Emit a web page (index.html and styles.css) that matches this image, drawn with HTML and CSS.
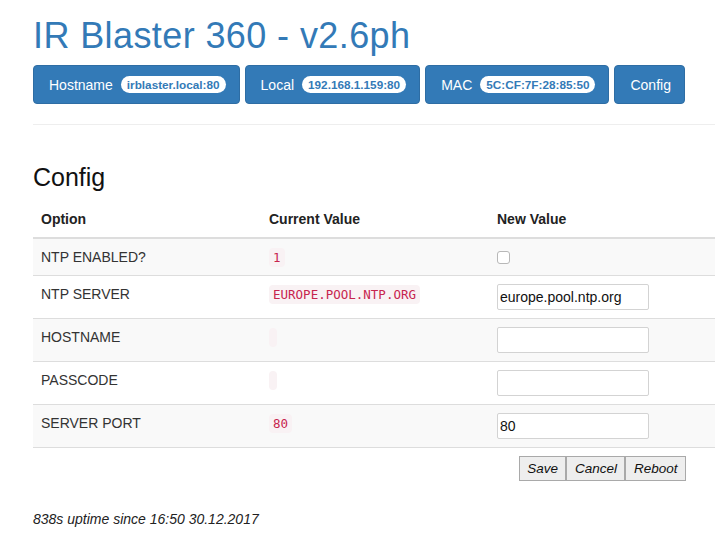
FILE: index.html
```html
<!DOCTYPE html>
<html>
<head>
<meta charset="utf-8">
<title>IR Blaster 360</title>
<link rel="stylesheet" href="styles.css">
</head>
<body>
<div class="page">
  <h1 class="title">IR Blaster 360 - v2.6ph</h1>
  <div class="nav">
    <a class="nav-btn">Hostname <span class="badge">irblaster.local:80</span></a>
    <a class="nav-btn">Local <span class="badge">192.168.1.159:80</span></a>
    <a class="nav-btn">MAC <span class="badge">5C:CF:7F:28:85:50</span></a>
    <a class="nav-btn">Config</a>
  </div>
  <hr class="divider">
  <h3 class="section-title">Config</h3>
  <table class="config-table">
    <thead>
      <tr><th>Option</th><th>Current Value</th><th>New Value</th></tr>
    </thead>
    <tbody>
      <tr class="odd"><td>NTP ENABLED?</td><td><code>1</code></td><td><span class="checkbox"></span></td></tr>
      <tr><td>NTP SERVER</td><td><code>EUROPE.POOL.NTP.ORG</code></td><td><input class="field" type="text" value="europe.pool.ntp.org"></td></tr>
      <tr class="odd"><td>HOSTNAME</td><td><code></code></td><td><input class="field" type="text" value=""></td></tr>
      <tr><td>PASSCODE</td><td><code></code></td><td><input class="field" type="text" value=""></td></tr>
      <tr class="odd"><td>SERVER PORT</td><td><code>80</code></td><td><input class="field" type="text" value="80"></td></tr>
    </tbody>
  </table>
  <div class="actions">
    <button class="act">Save</button><button class="act">Cancel</button><button class="act">Reboot</button>
  </div>
  <p class="uptime">838s uptime since 16:50 30.12.2017</p>
</div>
</body>
</html>
```

FILE: styles.css
```css
html, body {
  margin: 0;
  padding: 0;
  overflow: hidden;
  background: #fff;
}
body {
  font-family: "Liberation Sans", Arial, sans-serif;
  font-size: 14px;
  line-height: 20px;
  color: #333;
}
.page {
  width: 684px;
  padding-left: 33px;
}
.title {
  margin: 16px 0 9px;
  font-size: 36px;
  font-weight: normal;
  line-height: 40px;
  color: #337ab7;
  letter-spacing: 0.4px;
}
.nav {
  display: flex;
  gap: 5px;
}
.nav-btn {
  display: flex;
  align-items: center;
  gap: 8px;
  height: 39px;
  box-sizing: border-box;
  padding: 0 13px 0 15px;
  background: #337ab7;
  border: 1px solid #2e6da4;
  border-radius: 4px;
  color: #fff;
  font-size: 14px;
  text-decoration: none;
}
.badge {
  display: inline-block;
  padding: 3px 6px 2px;
  background: #fff;
  color: #337ab7;
  font-size: 11.75px;
  font-weight: bold;
  line-height: 12px;
  border-radius: 9px;
}
.divider {
  margin: 20px 0 0;
  border: 0;
  border-top: 1px solid #eee;
}
.section-title {
  margin: 38px 0 10px;
  font-size: 25px;
  font-weight: normal;
  line-height: 28px;
  color: #111;
}
.config-table {
  width: 684px;
  table-layout: fixed;
  border-collapse: collapse;
  border-spacing: 0;
}
.config-table th,
.config-table td {
  padding: 8px;
  text-align: left;
  vertical-align: top;
  line-height: 20px;
}
.config-table th {
  font-weight: bold;
  color: #222;
  border-bottom: 2px solid #ddd;
}
.config-table td {
  border-top: 1px solid #ddd;
}
.config-table tbody tr:last-child td {
  border-bottom: 1px solid #ddd;
}
.config-table tr.odd td {
  background: #f9f9f9;
}
code {
  padding: 2px 4px;
  font-family: "DejaVu Sans Mono", "Liberation Mono", monospace;
  font-size: 12.5px;
  line-height: 14px;
  color: #c7254e;
  background: #f9f2f4;
  border-radius: 4px;
}
.checkbox {
  display: block;
  width: 11px;
  height: 11px;
  margin-top: 4px;
  border: 1px solid #b8b8b8;
  border-radius: 3px;
  background: #fff;
}
.field {
  display: block;
  width: 152px;
  height: 26px;
  box-sizing: border-box;
  margin: 0;
  padding: 1px 2px;
  border: 1px solid #d3d3d3;
  border-radius: 2px;
  font-family: "Liberation Sans", Arial, sans-serif;
  font-size: 14px;
  color: #111;
  background: #fff;
}
.actions {
  display: flex;
  justify-content: flex-end;
  padding: 8px 31px 0 0;
}
.act {
  margin: 0;
  height: 25px;
  padding: 0 7.5px;
  border: 1px solid #a9a9a9;
  background: #eeeeee;
  font-family: "Liberation Sans", Arial, sans-serif;
  font-size: 13.5px;
  font-style: italic;
  color: #111;
  border-radius: 0;
}
.uptime {
  margin: 28px 0 0;
  font-style: italic;
  font-size: 14px;
  line-height: 20px;
  color: #222;
}
```
